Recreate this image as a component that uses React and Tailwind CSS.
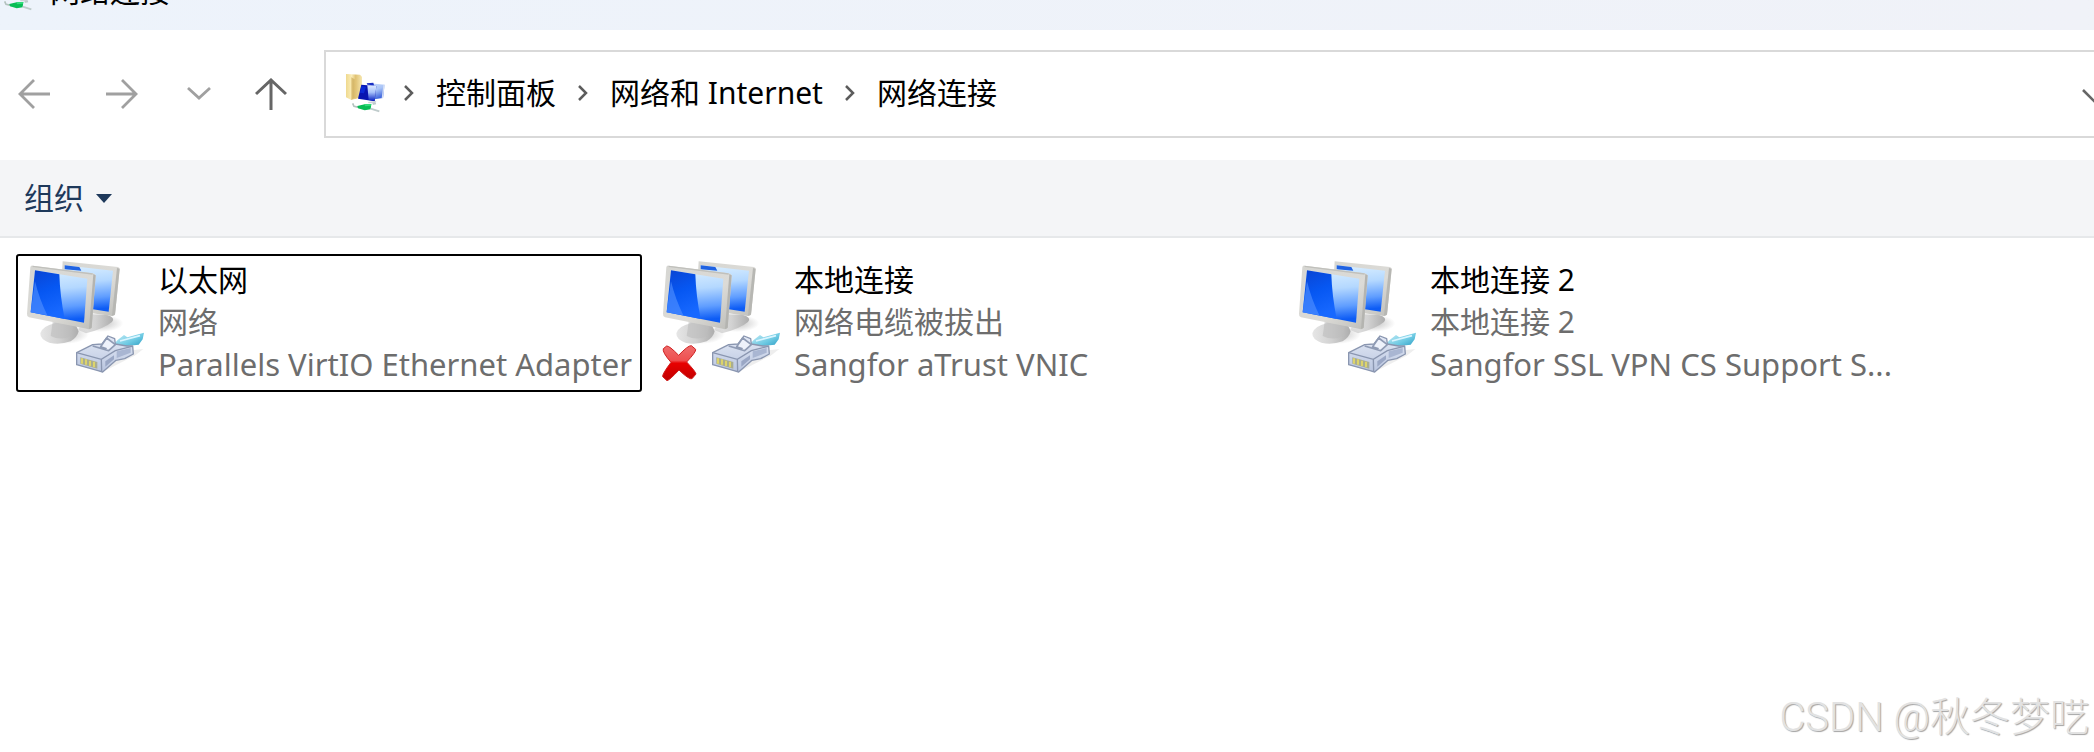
const connections = [
  { name: "以太网", status: "网络", device: "Parallels VirtIO Ethernet Adapter", focused: true },
  { name: "本地连接", status: "网络电缆被拔出", device: "Sangfor aTrust VNIC", unplugged: true },
  { name: "本地连接 2", status: "本地连接 2", device: "Sangfor SSL VPN CS Support S..." },
];

function FolderNetworkIcon({ className }) {
  return (
    <svg viewBox="0 0 126 126" className={className} aria-hidden="true">
      <defs>
        <linearGradient id="folder" x1="0" x2="1">
          <stop offset="0" stopColor="#efd98e" />
          <stop offset="0.35" stopColor="#fbedb8" />
          <stop offset="0.6" stopColor="#e0c273" />
          <stop offset="1" stopColor="#f6e7b0" />
        </linearGradient>
        <linearGradient id="miniBack" x1="0" y1="0" x2="0.4" y2="1">
          <stop offset="0" stopColor="#c9dbfb" />
          <stop offset="0.5" stopColor="#a9c4f7" />
          <stop offset="1" stopColor="#3f66dd" />
        </linearGradient>
        <linearGradient id="miniShine" x1="0" y1="0" x2="0" y2="1">
          <stop offset="0" stopColor="#dfeaff" />
          <stop offset="0.45" stopColor="#a8c3fa" />
          <stop offset="1" stopColor="#0c26c4" />
        </linearGradient>
      </defs>
      <path d="M6 6 48 8 54 14 54 50 44 78 22 84 6 76Z" fill="url(#folder)" />
      <path d="M22 16 32 22V78L22 84Z" fill="#cdab58" opacity=".7" />
      <path d="M78 34 122 38 117 78 90 82Z" fill="url(#miniBack)" />
      <path d="M118 38 122 38 117 78 113 78Z" fill="#d3def5" />
      <path d="M52 38 97 42 92 88 42 80Z" fill="#0815b0" />
      <path d="M70 40 97 42 92 86 74 84Z" fill="url(#miniShine)" />
      <path d="M68 34 88 32 90 40 70 38Z" fill="#1a2fc4" />
      <path d="M52 42 66 44 60 64 48 62Z" fill="#0c2ad4" />
      <path d="M72 90 98 86 92 94 74 94Z" fill="#ced2d8" />
      <path d="M26 94 30 103 48 107" fill="none" stroke="#b3c2be" strokeWidth="5" />
      <path d="M40 102 62 97 82 96 80 112 62 115 42 109Z" fill="#07bd55" />
      <path d="M60 97 82 96 81 101 64 103Z" fill="#33dc7c" />
      <path d="M80 110 106 118M86 96 96 94" stroke="#bfcbcb" strokeWidth="6" />
    </svg>
  );
}

function ConnectionIcon({ id, unplugged }) {
  const url = (name) => `url(#${name}-${id})`;
  return (
    <svg viewBox="48 45 360 378" className="h-[126px] w-[120px] shrink-0" aria-hidden="true">
      <defs>
        <linearGradient id={`deep-${id}`} x1="0" y1="0" x2="0.3" y2="1">
          <stop offset="0" stopColor="#0a44d2" />
          <stop offset="0.5" stopColor="#0657f2" />
          <stop offset="1" stopColor="#1768ff" />
        </linearGradient>
        <linearGradient id={`shine-${id}`} x1="0" y1="0" x2="0.1" y2="1">
          <stop offset="0" stopColor="#dcf0ff" />
          <stop offset="0.4" stopColor="#b4d8ff" />
          <stop offset="0.75" stopColor="#5f9dff" />
          <stop offset="1" stopColor="#0d5cf5" />
        </linearGradient>
        <linearGradient id={`frame-${id}`} x1="0" y1="0" x2="1" y2="1">
          <stop offset="0" stopColor="#d6d6d2" />
          <stop offset="0.6" stopColor="#dcdbd7" />
          <stop offset="1" stopColor="#bdbdb9" />
        </linearGradient>
        <linearGradient id={`stand-${id}`} x1="0" x2="1">
          <stop offset="0" stopColor="#e6e6e6" />
          <stop offset="0.5" stopColor="#d2d2d2" />
          <stop offset="1" stopColor="#adadad" />
        </linearGradient>
        <linearGradient id={`plug-${id}`} x1="0" y1="0" x2="0" y2="1">
          <stop offset="0" stopColor="#e4eaf6" />
          <stop offset="1" stopColor="#b9c5df" />
        </linearGradient>
        <linearGradient id={`cable-${id}`} x1="0" y1="0" x2="1" y2="1">
          <stop offset="0" stopColor="#d6f2fa" />
          <stop offset="0.55" stopColor="#6ecae3" />
          <stop offset="1" stopColor="#168db8" />
        </linearGradient>
        <linearGradient id={`cross-${id}`} x1="0" y1="0" x2="0" y2="1">
          <stop offset="0" stopColor="#ee6c6c" />
          <stop offset="0.42" stopColor="#ef5050" />
          <stop offset="0.5" stopColor="#e80000" />
          <stop offset="1" stopColor="#c00000" />
        </linearGradient>
        <radialGradient id={`shadow-${id}`}>
          <stop offset="0" stopColor="#8c8c8c" stopOpacity=".55" />
          <stop offset="1" stopColor="#8c8c8c" stopOpacity="0" />
        </radialGradient>
      </defs>

      <ellipse cx="272" cy="238" rx="68" ry="26" fill={url("shadow")} />
      <path d="M225 210 290 212Q318 220 306 234 282 254 228 268L205 258Z" fill={url("stand")} />
      <path d="M158 52 324 69Q330 71 329 78L315 210Q313 217 306 216L236 206 150 180Z" fill={url("frame")} />
      <path d="M164 64 309 80 296 203 164 182Z" fill={url("shine")} />
      <path d="M164 64 208 69 214 80 164 76Z" fill="#1f62e2" />
      <path d="M321 72 329 74 315 212 306 214Z" fill="#b7b7b3" />

      <ellipse cx="165" cy="270" rx="72" ry="30" fill={url("shadow")} />
      <path d="M128 226 196 240 206 262Q202 280 182 292 148 304 118 296 90 286 91 268 98 246 134 238Z" fill={url("stand")} />
      <path d="M128 234 190 244 180 278Q150 290 122 276Z" fill="#bcbcbc" opacity=".6" />
      <path d="M68 65 248 88Q258 90 257 99L245 249Q243 257 234 255L57 220Q50 217 51 209L61 70Q62 64 68 65Z" fill={url("frame")} />
      <path d="M250 90 257 94 245 252 237 255Z" fill="#b4b4b0" />
      <path d="M68 67 248 90" stroke="#c0c0bc" strokeWidth="4" />
      <path d="M75 79 232 104 222 236 62 205Z" fill={url("shine")} />
      <path d="M75 79 148 91Q150 155 164 225L62 205Z" fill={url("deep")} />
      <path d="M75 112Q88 165 112 214L62 205Z" fill="#5592ff" opacity=".6" />

      <path d="M310 325 400 315 376 334 282 382Z" fill="#777" opacity=".12" />
      <path d="M306 307Q322 286 342 273L352 280 402 266 398 286 386 302 350 306 325 318Z" fill={url("cable")} />
      <path d="M330 291 390 275" stroke="#d9f5ff" strokeWidth="5" />
      <path d="M200 326 248 302 276 300 294 276 314 284 316 300 350 306 368 306 370 330 344 344 318 349 278 384 264 380 200 362Z" fill={url("plug")} stroke="#8a96b0" strokeWidth="4" strokeLinejoin="round" />
      <path d="M200 326 274 346 316 320 366 307M274 346 275 382" fill="none" stroke="#8a96b0" strokeWidth="4" />
      <path d="M248 306 296 320 316 302 290 282 272 308 290 314" fill="#eef2fb" stroke="#8f9bb4" strokeWidth="5" strokeLinejoin="round" />
      <path d="M286 352 312 334V346L286 368Z" fill="#9aa7c5" />
      <path d="M320 322 362 312V326L320 342Z" fill="#a9b6d2" />
      <path d="M211 340 262 354V374L211 359Z" fill="#a9ad91" />
      <path d="M216 343V359M228 346V362M240 350V366M252 353V370" stroke="#ddd46a" strokeWidth="6" />

      {unplugged && (
        <path
          d="M52 314 62 306Q70 305 98 334 126 304 136 305L149 316Q151 323 122 354 150 384 150 390L138 404Q130 408 99 378 70 409 63 410L50 398Q48 391 75 355 48 324 52 314Z"
          fill={url("cross")}
          stroke="#cf2020"
          strokeWidth="3"
        />
      )}
    </svg>
  );
}

function Separator() {
  return (
    <svg viewBox="0 0 12 18" className="mx-[21px] h-[18px] w-3 shrink-0" fill="none" stroke="#5c5c5c" strokeWidth="2.5" aria-hidden="true">
      <path d="M2 2 9 9 2 16" />
    </svg>
  );
}

export default function App() {
  return (
    <div className="flex min-h-screen flex-col overflow-x-hidden bg-white font-['Noto_Sans','Noto_Sans_CJK_SC',sans-serif] text-[30px] leading-[42px] text-black">
      <header className="flex h-[30px] items-end overflow-hidden bg-linear-to-r from-[#edf3fb] to-[#f0f2f8]">
        <FolderNetworkIcon className="-ml-1 mb-[18px] h-[42px] w-[42px] shrink-0" />
        <h1 className="mb-[18px] ml-3">网络连接</h1>
      </header>

      <nav className="flex items-center pt-5 pb-[22px]">
        <button type="button" aria-label="后退" className="flex w-[68px] justify-center">
          <svg viewBox="0 0 32 32" className="size-8" fill="none" stroke="#a0a0a0" strokeWidth="2.8">
            <path d="M32 16H2M16 2 2 16 16 30" />
          </svg>
        </button>
        <button type="button" aria-label="前进" className="flex w-[108px] justify-center">
          <svg viewBox="0 0 32 32" className="size-8" fill="none" stroke="#a0a0a0" strokeWidth="2.8">
            <path d="M0 16H30M16 2 30 16 16 30" />
          </svg>
        </button>
        <button type="button" aria-label="最近浏览的位置" className="flex w-[46px] justify-center">
          <svg viewBox="0 0 24 24" className="size-6" fill="none" stroke="#a0a0a0" strokeWidth="2.8">
            <path d="M1 6 12 16 23 6" />
          </svg>
        </button>
        <button type="button" aria-label="上移" className="flex w-[98px] justify-center">
          <svg viewBox="0 0 32 32" className="size-8" fill="none" stroke="#666" strokeWidth="3">
            <path d="M16 32V2M1 16 16 2 31 16" />
          </svg>
        </button>
        <div className="ml-1 flex h-[88px] min-w-0 flex-1 items-center border-y-2 border-l-2 border-[#d9d9d9] pb-[2px] pl-[18px]">
          <FolderNetworkIcon className="mr-[-4px] h-[42px] w-[42px] shrink-0" />
          <Separator />
          <a href="#control-panel" className="whitespace-nowrap">控制面板</a>
          <Separator />
          <a href="#network" className="whitespace-nowrap">网络和 Internet</a>
          <Separator />
          <a href="#connections" className="whitespace-nowrap">网络连接</a>
          <button type="button" aria-label="以前的位置" className="ml-auto w-3 shrink-0 overflow-hidden pt-2">
            <svg viewBox="0 0 28 16" className="h-4 w-7 max-w-none" fill="none" stroke="#666" strokeWidth="2.6">
              <path d="M1 1 14 14 27 1" />
            </svg>
          </button>
        </div>
      </nav>

      <div className="flex h-[78px] items-center border-b-2 border-[#e6e8ea] bg-[#f4f5f7] pl-6">
        <button type="button" className="flex items-center gap-3 text-[#1e395b]">
          组织
          <svg viewBox="0 0 16 9" className="h-[9px] w-4" fill="#1e395b" aria-hidden="true">
            <path d="M0 0H16L8 9Z" />
          </svg>
        </button>
      </div>

      <main className="flex flex-1 flex-col">
        <ul className="flex flex-wrap gap-x-[10px] px-4 pt-4">
          {connections.map((item, index) => (
            <li key={item.name} className="w-[626px]">
              <button
                type="button"
                className={
                  item.focused
                    ? "flex w-full gap-3 rounded-[3px] border-2 border-black pt-[3px] pb-[5px] pl-2 text-left"
                    : "flex w-full gap-3 rounded-[3px] border-2 border-transparent pt-[3px] pb-[5px] pl-2 text-left"
                }
              >
                <ConnectionIcon id={index} unplugged={item.unplugged} />
                <span className="flex min-w-0 flex-col whitespace-nowrap text-[#6d6d6d]">
                  <span className="text-black">{item.name}</span>
                  <span>{item.status}</span>
                  <span className="text-[31px]">{item.device}</span>
                </span>
              </button>
            </li>
          ))}
        </ul>
        <p className="mt-auto self-end pr-1 pb-2 text-[40px] leading-[52px] font-light whitespace-nowrap text-[#e2e2e2] font-['Roboto','Noto_Sans_CJK_SC',sans-serif] [text-shadow:1px_1px_1px_#a3a3a3]">
          CSDN @秋冬梦呓
        </p>
      </main>
    </div>
  );
}
